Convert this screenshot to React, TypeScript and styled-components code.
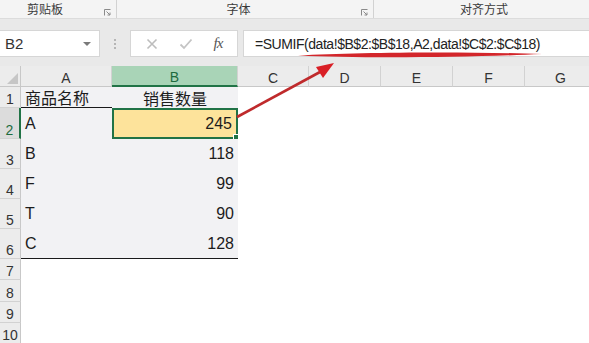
import React from 'react';
import styled, { createGlobalStyle } from 'styled-components';

// Estilos globais
const GlobalStyle = createGlobalStyle`
  html, body {
    margin: 0;
    padding: 0;
    background: #ffffff;
    overflow: hidden;
  }
  body {
    font-family: "Liberation Sans", "Noto Sans CJK SC", sans-serif;
    color: #222;
  }
`;

const Page = styled.div`
  position: relative;
  width: 589px;
  height: 343px;
  overflow: hidden;
  background: #ffffff;
`;

// Faixa dos grupos da faixa de opções
const RibbonBand = styled.div`
  display: flex;
  height: 19px;
  background: #f4f4f4;
  border-bottom: 1px solid #dcdcdc;
  box-sizing: border-box;
`;

const RibbonGroup = styled.div<{ $w: number; $pad?: number; $last?: boolean }>`
  position: relative;
  display: flex;
  align-items: center;
  width: ${(p) => p.$w}px;
  flex: none;
  padding-right: ${(p) => p.$pad ?? 0}px;
  padding-top: 2px;
  box-sizing: border-box;
  border-right: ${(p) => (p.$last ? 'none' : '1px solid #d2d2d2')};
  height: 18px;
`;

const GroupLabel = styled.span`
  flex: 1;
  text-align: center;
  font-size: 12px;
  color: #3a3a3a;
  line-height: 16px;
`;

const Launcher = styled.svg`
  position: absolute;
  right: 5px;
  top: 9px;
`;

// Barra de fórmulas
const FormulaArea = styled.div`
  display: flex;
  align-items: stretch;
  height: 47px;
  padding-top: 11px;
  padding-bottom: 9px;
  box-sizing: border-box;
  background: #e9e9e9;
`;

const NameBox = styled.div`
  display: flex;
  align-items: center;
  justify-content: space-between;
  width: 100px;
  flex: none;
  background: #fff;
  border: 1px solid #d6d6d6;
  border-left: none;
  box-sizing: border-box;
  padding: 0 8px 0 5px;
  font-size: 15px;
  color: #333;
`;

const DropArrow = styled.span`
  width: 0;
  height: 0;
  border-left: 4px solid transparent;
  border-right: 4px solid transparent;
  border-top: 4px solid #7a7a7a;
`;

const Grip = styled.div`
  width: 30px;
  flex: none;
  display: flex;
  flex-direction: column;
  align-items: center;
  justify-content: center;
  gap: 2px;
  span {
    width: 2px;
    height: 2px;
    background: #b5b5b5;
  }
`;

const FxBox = styled.div`
  display: flex;
  align-items: center;
  justify-content: space-around;
  width: 108px;
  flex: none;
  background: #fff;
  border: 1px solid #d6d6d6;
  box-sizing: border-box;
  margin-right: 5px;
  padding: 0 4px;
`;

const FxText = styled.span`
  font-family: "Liberation Serif", serif;
  font-style: italic;
  font-size: 15px;
  color: #555;
  letter-spacing: -1px;
`;

const FormulaInput = styled.div`
  flex: 1;
  display: flex;
  align-items: center;
  background: #fff;
  border: 1px solid #d6d6d6;
  border-right: none;
  box-sizing: border-box;
  padding-left: 11px;
  font-size: 14px;
  letter-spacing: -0.45px;
  color: #222;
  white-space: nowrap;
`;

// Grade da planilha
const Sheet = styled.div`
  display: grid;
  grid-template-columns: 21px 91px 126px 71px 72px 72px 72px 72px;
  grid-template-rows: 21px 21px 31px 30px 30px 30px 30px 21px 22px 21px 21px;
`;

const Corner = styled.div`
  position: relative;
  background: #ececec;
  border-right: 1px solid #c8c8c8;
  border-bottom: 1px solid #c8c8c8;
  box-sizing: border-box;
  &::after {
    content: '';
    position: absolute;
    right: 2px;
    bottom: 2px;
    border-left: 11px solid transparent;
    border-bottom: 11px solid #c6c6c6;
  }
`;

const ColHead = styled.div<{ $active?: boolean }>`
  display: flex;
  align-items: center;
  justify-content: center;
  font-size: 14px;
  color: ${(p) => (p.$active ? '#1e6b3e' : '#333')};
  background: ${(p) => (p.$active ? '#a9d4b7' : '#ececec')};
  border-right: 1px solid #d2d2d2;
  border-bottom: ${(p) => (p.$active ? '2px solid #217346' : '1px solid #c8c8c8')};
  box-sizing: border-box;
  padding-top: 3px;
`;

const RowHead = styled.div<{ $active?: boolean }>`
  display: flex;
  align-items: flex-end;
  justify-content: center;
  padding-bottom: 0;
  font-size: 14px;
  color: ${(p) => (p.$active ? '#1e6b3e' : '#333')};
  background: ${(p) => (p.$active ? '#dcdcdc' : '#ececec')};
  border-right: ${(p) => (p.$active ? '2px solid #217346' : '1px solid #c8c8c8')};
  border-bottom: 1px solid #d2d2d2;
  box-sizing: border-box;
`;

const Cell = styled.div<{
  $fill?: boolean;
  $align?: 'left' | 'right' | 'center';
  $under?: boolean;
  $selected?: boolean;
}>`
  position: relative;
  display: flex;
  align-items: center;
  justify-content: ${(p) =>
    p.$align === 'right' ? 'flex-end' : p.$align === 'center' ? 'center' : 'flex-start'};
  padding: 0 4px 0 4px;
  font-size: 16px;
  color: #1c1c1c;
  background: ${(p) => (p.$selected ? '#fde39b' : p.$fill ? '#f2f2f4' : '#fff')};
  border-bottom: ${(p) => (p.$under ? '1px solid #1a1a1a' : 'none')};
  box-sizing: border-box;
  ${(p) =>
    p.$selected &&
    `
    border: 2px solid #217346;
    &::after {
      content: '';
      position: absolute;
      right: -4px;
      bottom: -4px;
      width: 5px;
      height: 5px;
      background: #217346;
      border: 1px solid #fff;
    }
  `}
`;

// Anotação vermelha sobreposta
const Annotation = styled.svg`
  position: absolute;
  left: 0;
  top: 0;
  pointer-events: none;
`;

const cols = ['A', 'B', 'C', 'D', 'E', 'F', 'G'];

const rows: { name: string; qty: string }[] = [
  { name: 'A', qty: '245' },
  { name: 'B', qty: '118' },
  { name: 'F', qty: '99' },
  { name: 'T', qty: '90' },
  { name: 'C', qty: '128' },
];

const LauncherIcon = () => (
  <Launcher width="7" height="7" viewBox="0 0 7 7">
    <path d="M0.5 6.5 V0.5 H6.5" fill="none" stroke="#8a8a8a" strokeWidth="1" />
    <path d="M2.5 2.5 L6 6 M6 3.5 V6 H3.5" fill="none" stroke="#8a8a8a" strokeWidth="1" />
  </Launcher>
);

const App = () => {
  const blanks = (row: number) =>
    cols.slice(2).map((c) => <Cell key={`${c}${row}`} />);

  return (
    <Page>
      <GlobalStyle />
      <RibbonBand>
        <RibbonGroup $w={117} $pad={26}>
          <GroupLabel>剪贴板</GroupLabel>
          <LauncherIcon />
        </RibbonGroup>
        <RibbonGroup $w={257} $pad={13}>
          <GroupLabel>字体</GroupLabel>
          <LauncherIcon />
        </RibbonGroup>
        <RibbonGroup $w={230} $pad={10} $last>
          <GroupLabel>对齐方式</GroupLabel>
        </RibbonGroup>
      </RibbonBand>

      <FormulaArea>
        <NameBox>
          B2
          <DropArrow />
        </NameBox>
        <Grip>
          <span />
          <span />
          <span />
        </Grip>
        <FxBox>
          <svg width="12" height="12" viewBox="0 0 12 12">
            <path d="M1.5 1.5 L10.5 10.5 M10.5 1.5 L1.5 10.5" stroke="#bdbdbd" strokeWidth="1.6" />
          </svg>
          <svg width="14" height="12" viewBox="0 0 14 12">
            <path d="M1.5 6.5 L5 10 L12.5 1.5" fill="none" stroke="#c4c4c4" strokeWidth="1.8" />
          </svg>
          <FxText>fx</FxText>
        </FxBox>
        <FormulaInput>=SUMIF(data!$B$2:$B$18,A2,data!$C$2:$C$18)</FormulaInput>
      </FormulaArea>

      <Sheet>
        <Corner />
        {cols.map((c) => (
          <ColHead key={c} $active={c === 'B'}>
            {c}
          </ColHead>
        ))}

        <RowHead>1</RowHead>
        <Cell $fill $under>商品名称</Cell>
        <Cell $fill $align="center">销售数量</Cell>
        {blanks(1)}

        {rows.map((r, i) => {
          const n = i + 2;
          const last = n === 6;
          return (
            <React.Fragment key={n}>
              <RowHead $active={n === 2}>{n}</RowHead>
              <Cell $fill $under={last}>{r.name}</Cell>
              <Cell $fill $align="right" $under={last} $selected={n === 2}>
                {r.qty}
              </Cell>
              {blanks(n)}
            </React.Fragment>
          );
        })}

        {[7, 8, 9, 10].map((n) => (
          <React.Fragment key={n}>
            <RowHead>{n}</RowHead>
            <Cell />
            <Cell />
            {blanks(n)}
          </React.Fragment>
        ))}
      </Sheet>

      <Annotation width="589" height="343" viewBox="0 0 589 343">
        <path
          d="M298 55.5 C360 52, 470 51.5, 542 54 C470 57.5, 360 58.5, 298 55.5 Z"
          fill="#d3262b"
        />
        <line x1="237" y1="117" x2="320" y2="72" stroke="#bf2a2c" strokeWidth="2.6" />
        <polygon points="334,63 316,67 323,78" fill="#d91f26" />
      </Annotation>
    </Page>
  );
};

export default App;
